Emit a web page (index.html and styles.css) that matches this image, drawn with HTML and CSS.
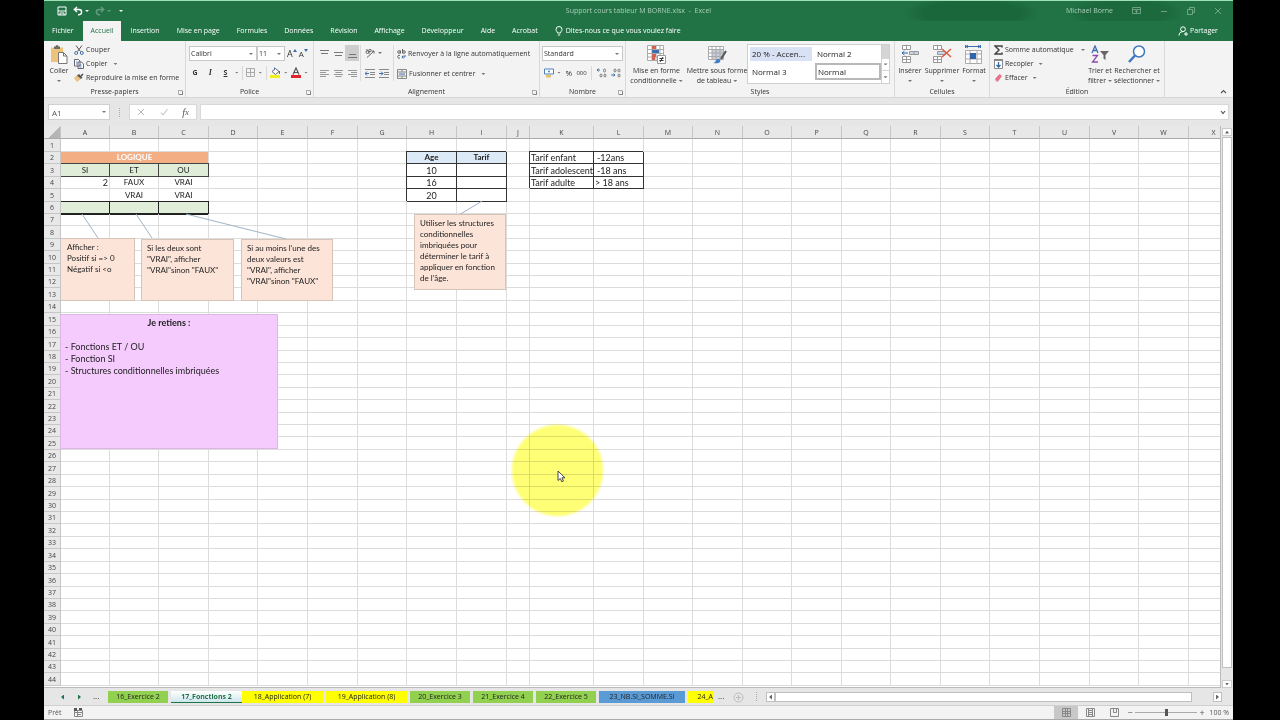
FILE: index.html
```html
<!DOCTYPE html>
<html lang="fr">
<head>
<meta charset="utf-8">
<title>Support cours tableur M BORNE.xlsx - Excel</title>
<link rel="stylesheet" href="styles.css">
</head>
<body>
<div class="app">
  <header class="titlebar">
    <div class="quick">
      <button aria-label="Enregistrer"><svg width="10" height="10" viewBox="0 0 10 10" fill="none" stroke="#fff"><path d="M1 1h8v8H1zM1 5h8M3 9V7h4v2"/></svg></button>
      <button aria-label="Annuler"><svg width="10" height="10" viewBox="0 0 10 10" fill="none" stroke="#fff" stroke-width="1.4"><path d="M4 1L1.300 3.500 4 6M1.500 3.500H6a2.600 2.600 0 0 1 0 5.200H5"/></svg><i class="arrow"></i></button>
      <button class="dim" aria-label="Rétablir"><svg width="10" height="10" viewBox="0 0 10 10" fill="none" stroke="#fff" stroke-width="1.400"><path d="M6 1l2.700 2.500L6 6M8.500 3.500H4a2.600 2.600 0 0 0 0 5.200h1"/></svg><i class="arrow"></i></button>
      <button class="more" aria-label="Personnaliser"><i class="arrow"></i></button>
    </div>
    <div class="doc">Support cours tableur M BORNE.xlsx&nbsp; -&nbsp; Excel</div>
    <div class="win">
      <span>Michael Borne</span>
      <button aria-label="Options du ruban"><svg width="9" height="8" viewBox="0 0 9 8" fill="none" stroke="#cfe6d8"><path d="M.5.500h8v6h-8zM.5 2.500h8M4.500 6V3.500M3 4.500l1.500-1L6 4.500"/></svg></button>
      <button aria-label="Réduire"><svg width="8" height="8" viewBox="0 0 8 8" stroke="#cfe6d8"><path d="M1 4.500h6"/></svg></button>
      <button aria-label="Restaurer"><svg width="8" height="8" viewBox="0 0 8 8" fill="none" stroke="#cfe6d8"><path d="M.5 2.500h5v5h-5zM2.500 2V.5h5v5H6"/></svg></button>
      <button aria-label="Fermer"><svg width="8" height="8" viewBox="0 0 8 8" stroke="#cfe6d8"><path d="M1 1l6 6M7 1L1 7"/></svg></button>
    </div>
  </header>

  <nav class="tabs">
    <button>Fichier</button><button class="active">Accueil</button><button>Insertion</button><button>Mise en page</button><button>Formules</button><button>Données</button><button>Révision</button><button>Affichage</button><button>Développeur</button><button>Aide</button><button>Acrobat</button>
    <button class="tell"><svg width="8" height="10" viewBox="0 0 8 10" fill="none" stroke="#fff"><path d="M2.500 7C2.500 5.500 1 5 1 3.500a3 3 0 0 1 6 0C7 5 5.500 5.500 5.500 7zM2.800 9h2.400"/></svg>Dites-nous ce que vous voulez faire</button>
    <button class="share"><svg width="10" height="10" viewBox="0 0 10 10" fill="none" stroke="#fff"><circle cx="5" cy="3.200" r="2.400"/><path d="M1 9.500C1 7 2.500 5.800 4.500 5.800M6 8h4M8 6v4"/></svg>Partager</button>
  </nav>

  <section class="ribbon">
    <div class="group g-clip">
      <div class="body">
        <button class="big"><svg width="18" height="19" viewBox="0 0 18 19"><path d="M1 2.500h12V17H1z" fill="#eec47a"/><path d="M4 1.500h1.500a1.500 1.500 0 0 1 3 0H10V4H4z" fill="#6b6b6b"/><path d="M8.500 7.500h5l3.500 3.500v7.500H8.500z" fill="#fff" stroke="#777"/><path d="M13.500 7.500V11H17" fill="none" stroke="#777"/></svg><span>Coller</span><i class="arrow"></i></button>
        <div class="list">
          <button><svg width="10" height="10" viewBox="0 0 10 10" fill="none"><path d="M2 .5l4.500 6M8 .5l-4.500 6" stroke="#555"/><circle cx="2.200" cy="8" r="1.500" stroke="#4472a8"/><circle cx="7.800" cy="8" r="1.500" stroke="#4472a8"/></svg>Couper</button>
          <button><svg width="10" height="10" viewBox="0 0 10 10" fill="#fff" stroke="#667"><path d="M.5.500h4l1.500 1.500v5H.5zM4 3h3.500L9.500 5v4.500H4z"/><path d="M2 3h1.500M2 5h1.500M5.500 6h2M5.500 8h2" stroke="#4d80bd"/></svg>Copier<i class="arrow far"></i></button>
          <button><svg width="10" height="10" viewBox="0 0 10 10"><path d="M0 5l3-3 4 4-4 3z" fill="#edc083"/><path d="M3 2.500L5 1l3.500 3.500L7 6z" fill="#555"/><path d="M7 3l2-2" stroke="#444" stroke-width="1.500"/></svg>Reproduire la mise en forme</button>
        </div>
      </div>
      <h2>Presse-papiers<i class="launch"></i></h2>
    </div>

    <div class="group g-font">
      <div class="body rows">
        <div class="row">
          <label class="combo font"><select aria-label="Police"><option>Calibri</option></select><i class="arrow"></i></label><label class="combo size"><select aria-label="Taille"><option>11</option></select><i class="arrow"></i></label>
          <button class="glyph grow" aria-label="Agrandir">A<svg width="4" height="3" viewBox="0 0 4 3"><path d="M0 3l2-3 2 3z" fill="#3c6eaf"/></svg></button><button class="glyph shrink" aria-label="Réduire la police">A<svg width="4" height="3" viewBox="0 0 4 3"><path d="M0 0h4L2 3z" fill="#3c6eaf"/></svg></button>
        </div>
        <div class="row tools">
          <button class="bold">G</button><button class="ital">I</button><button class="under">S</button><i class="arrow"></i><i class="sep"></i>
          <button aria-label="Bordures"><svg width="9" height="9" viewBox="0 0 9 9" fill="none" stroke="#aaa"><path d="M.5.500h8v8h-8zM4.500 0v9M0 4.500h9"/></svg><i class="arrow"></i></button><i class="sep"></i>
          <button aria-label="Remplissage"><svg width="11" height="11" viewBox="0 0 11 11"><path d="M2 4.500L5.500 1.500 9 4.500 5.500 7.500z" fill="#fff" stroke="#666"/><path d="M4.500 3V.5M9.500 4v3" stroke="#4472a8"/><path d="M0 8h10v3H0z" fill="#f2f01c"/></svg><i class="arrow"></i></button>
          <button aria-label="Couleur de police"><svg width="10" height="11" viewBox="0 0 10 11"><path d="M2 7.500L5 1l3 6.500M3.200 5.500h3.600" fill="none" stroke="#555" stroke-width="1.200"/><path d="M0 8h10v3H0z" fill="#e0262a"/></svg><i class="arrow"></i></button>
        </div>
      </div>
      <h2>Police<i class="launch"></i></h2>
    </div>

    <div class="group g-align">
      <div class="body">
        <div class="aligns">
          <button aria-label="Haut"><svg width="9" height="9" viewBox="0 0 9 9" stroke="#777"><path d="M0 1.500h9M1 4.500h7"/></svg></button>
          <button aria-label="Milieu"><svg width="9" height="9" viewBox="0 0 9 9" stroke="#777"><path d="M0 3.500h9M1 6.500h7"/></svg></button>
          <button class="on" aria-label="Bas"><svg width="9" height="9" viewBox="0 0 9 9" stroke="#777"><path d="M1 5.500h7M0 8.500h9"/></svg></button>
          <button aria-label="Gauche"><svg width="9" height="9" viewBox="0 0 9 9" stroke="#999"><path d="M0 1.500h9M0 3.500h6M0 5.500h9M0 7.500h6"/></svg></button>
          <button aria-label="Centrer"><svg width="9" height="9" viewBox="0 0 9 9" stroke="#999"><path d="M0 1.500h9M1.500 3.500h6M0 5.500h9M1.500 7.500h6"/></svg></button>
          <button aria-label="Droite"><svg width="9" height="9" viewBox="0 0 9 9" stroke="#999"><path d="M0 1.500h9M3 3.500h6M0 5.500h9M3 7.500h6"/></svg></button>
        </div>
        <div class="indent">
          <div><button aria-label="Orientation"><svg width="10" height="10" viewBox="0 0 10 10" fill="none" stroke="#666"><circle cx="2.500" cy="4" r="1.500"/><circle cx="5" cy="2.500" r="1.200"/><path d="M1.500 1l3 4.500M2 9.500L9 3M9 5.500V3H6.500"/></svg><i class="arrow"></i></button></div>
          <div><button aria-label="Diminuer le retrait"><svg width="10" height="9" viewBox="0 0 10 9" stroke="#888"><path d="M0 .5h10M5 3.500h5M5 5.500h5M0 8.500h10"/><path d="M0 4.500h4M2 2.500l-2 2 2 2" stroke="#3c6eaf" fill="none"/></svg></button><button aria-label="Augmenter le retrait"><svg width="10" height="9" viewBox="0 0 10 9" stroke="#888"><path d="M0 .5h10M5 3.500h5M5 5.500h5M0 8.500h10"/><path d="M0 4.500h4M2 2.500l2 2-2 2" stroke="#3c6eaf" fill="none"/></svg></button></div>
        </div>
        <div class="merge">
          <button><svg width="9" height="10" viewBox="0 0 9 10" fill="none" stroke="#666"><circle cx="2" cy="3" r="1.300"/><path d="M3.500 1.500v3M5.500 0v4.500"/><circle cx="7" cy="3" r="1.300"/><path d="M3 6.500a1.500 1.500 0 1 0 0 2.500"/><path d="M8 6v2H5M6.200 6.500L5 8l1.200 1.500" stroke="#3c6eaf"/></svg>Renvoyer à la ligne automatiquement</button>
          <button><svg width="10" height="10" viewBox="0 0 10 10" fill="none" stroke="#888"><path d="M.5.500h9v9h-9zM0 3h10M0 7h10M5 0v3M5 7v3"/><path d="M2 5h6" stroke="#3c6eaf"/></svg>Fusionner et centrer<i class="arrow far"></i></button>
        </div>
      </div>
      <h2>Alignement<i class="launch"></i></h2>
    </div>

    <div class="group g-num">
      <div class="body rows">
        <div class="row"><label class="combo fmt"><select aria-label="Format de nombre"><option>Standard</option></select><i class="arrow"></i></label></div>
        <div class="row nums">
          <button aria-label="Monétaire"><svg width="10" height="10" viewBox="0 0 10 10"><path d="M.5 1h9v5h-9z" fill="#fff" stroke="#4d80bd"/><circle cx="5" cy="3.500" r="1" fill="#4d80bd"/><path d="M2 7h5v2.500H2z" fill="#e9bd6e"/></svg><i class="arrow"></i></button>
          <button class="pct">%</button><button class="zeros">000</button><i class="sep"></i>
          <button class="dec" aria-label="Ajouter une décimale"><svg width="10" height="10" viewBox="0 0 10 10" fill="none" stroke="#777"><path d="M0 2h3M1.500 .5L0 2l1.500 1.500" stroke="#3c6eaf"/><ellipse cx="7.500" cy="2.500" rx="1" ry="1.500"/><ellipse cx="4" cy="7.500" rx="1" ry="1.500"/><ellipse cx="8" cy="7.500" rx="1" ry="1.500"/></svg></button>
          <button class="dec" aria-label="Réduire les décimales"><svg width="10" height="10" viewBox="0 0 10 10" fill="none" stroke="#777"><ellipse cx="4" cy="2.500" rx="1" ry="1.500"/><ellipse cx="8" cy="2.500" rx="1" ry="1.500"/><ellipse cx="8" cy="7.500" rx="1" ry="1.500"/><path d="M0 7h4M2.500 5.500L4 7 2.500 8.500" stroke="#3c6eaf"/></svg></button>
        </div>
      </div>
      <h2>Nombre<i class="launch"></i></h2>
    </div>

    <div class="group g-style">
      <div class="body">
        <button class="big"><svg width="19" height="19" viewBox="0 0 19 19"><path d="M.5.500h16v15H.5zM.5 4.500h16M.5 8.500h16M.5 12h16M5 .5v15M9 .5v15M13 .5v15" fill="#fff" stroke="#aaa"/><path d="M5 1h4v3H5zM5 9h4v3H5zM5 12h3v3H5z" fill="#d4604f"/><path d="M5 5h7v3H5z" fill="#3c6eaf"/><path d="M10.500 10.500h8v8h-8z" fill="#fff" stroke="#999"/><path d="M12.500 13.500h4M12.500 15.500h4M16 12l-3 5" stroke="#333"/></svg><span>Mise en forme<br>conditionnelle<i class="arrow"></i></span></button>
        <button class="big"><svg width="19" height="19" viewBox="0 0 19 19"><path d="M.5 1.500h15v13H.5z" fill="#fff" stroke="#aaa"/><path d="M4 5h11v9H4z" fill="#c5cdd8"/><path d="M.5 4.500h15M.5 8h15M.5 11.500h15M4 1.500v13M8 1.500v13M12 1.500v13" stroke="#aaa"/><path d="M18 6l-5 8" stroke="#555" stroke-width="2"/><path d="M5 18c3 0 2-4 5-4 2 0 3 1 2 3-1 1.500-4 1.500-7 1z" fill="#3f7fc6"/></svg><span>Mettre sous forme<br>de tableau<i class="arrow"></i></span></button>
        <div class="gallery">
          <div class="styles"><button class="accent">20 % - Accen...</button><button>Normal 2</button><button>Normal 3</button><button class="sel">Normal</button></div>
          <div class="gscroll"><button class="off" aria-label="Haut"></button><button aria-label="Bas"><i class="arrow"></i></button><button aria-label="Plus"><i class="arrow"></i></button></div>
        </div>
      </div>
      <h2>Styles</h2>
    </div>

    <div class="group g-cell">
      <div class="body">
        <button class="big"><svg width="18" height="19" viewBox="0 0 18 19" fill="#fff" stroke="#999"><path d="M1.500.500h8v4h-8zM5.500.500v4M1.500 11.500h8v6h-8zM5.500 11.500v6M1.500 14.500h8"/><path d="M8.500 6.500h9v3h-9zM13 6.500v3" fill="#c9d6e8"/><path d="M1 8h6M3.500 6L1 8l2.500 2" stroke="#2f67ad" fill="none"/></svg><span>Insérer</span><i class="arrow"></i></button>
        <button class="big"><svg width="20" height="19" viewBox="0 0 20 19" fill="#fff" stroke="#999"><path d="M1.500.500h8v4h-8zM5.500.500v4M1.500 11.500h8v6h-8zM5.500 11.500v6M1.500 14.500h8"/><path d="M5.500 6.500h8v3h-8z" fill="#c9d6e8"/><path d="M10 4l9 8M19 4l-9 8" stroke="#da5a3c" stroke-width="1.500"/></svg><span>Supprimer</span><i class="arrow"></i></button>
        <button class="big"><svg width="18" height="19" viewBox="0 0 18 19"><path d="M1 1.500h14M3 0L1 1.500 3 3M13 0l2 1.500L13 3M.5 0v3M15.500 0v3" stroke="#3c6eaf" fill="none"/><path d="M.5 5.500h16v13H.5zM5 5.500v13M12 5.500v13M.5 9h16M.5 14h16" fill="#fff" stroke="#aaa"/><path d="M5 8h6v6H5z" fill="#2f67ad"/></svg><span>Format</span><i class="arrow"></i></button>
      </div>
      <h2>Cellules</h2>
    </div>

    <div class="group g-edit">
      <div class="body">
        <div class="list">
          <button><svg width="9" height="10" viewBox="0 0 9 10" fill="none" stroke="#444" stroke-width="1.500"><path d="M8 2.500V1H1l4 4-4 4h7V7.500"/></svg>Somme automatique<i class="arrow far"></i></button>
          <button><svg width="9" height="10" viewBox="0 0 9 10"><path d="M.5.500h8v9h-8z" fill="#fff" stroke="#888"/><path d="M0 0h9v2H0z" fill="#888"/><path d="M4.500 3v5M2.500 6l2 2 2-2" stroke="#2f67ad" fill="none" stroke-width="1.300"/></svg>Recopier<i class="arrow"></i></button>
          <button><svg width="9" height="10" viewBox="0 0 9 10"><path d="M1 6l4.500-5L8 3 4 8.500H2z" fill="#e57385"/><path d="M1 6l2.500 2.500H2z" fill="#f5bcc4"/></svg>Effacer<i class="arrow"></i></button>
        </div>
        <button class="big"><svg width="18" height="19" viewBox="0 0 18 19" fill="none"><path d="M1 8l3-7 3 7M2 5.500h4" stroke="#3c6eaf" stroke-width="1.300"/><path d="M1.500 10.500h5l-5 6.500h5.500" stroke="#8a4bab" stroke-width="1.300"/><path d="M9 6h9l-3.500 4v5l-2-1.500V10z" fill="#666"/></svg><span>Trier et<br>filtrer<i class="arrow"></i></span></button>
        <button class="big"><svg width="18" height="19" viewBox="0 0 18 19" fill="none" stroke="#3f78bd"><circle cx="11" cy="6.500" r="5.500" fill="#fff" stroke-width="1.500"/><path d="M7 10.500L1 17" stroke-width="2.500"/></svg><span>Rechercher et<br>sélectionner<i class="arrow"></i></span></button>
      </div>
      <h2>Édition</h2>
    </div>
    <button class="collapse" aria-label="Réduire le ruban"><svg width="7" height="5" viewBox="0 0 7 5" fill="none" stroke="#555" stroke-width="1.200"><path d="M1 4l2.500-2.500L6 4"/></svg></button>
  </section>

  <section class="formula">
    <label class="namebox"><input aria-label="Zone Nom" value="A1"><i class="arrow"></i></label>
    <span class="dots"></span>
    <div class="fx"><button aria-label="Annuler"><svg width="8" height="8" viewBox="0 0 8 8" stroke="#bbb"><path d="M1 1l6 6M7 1L1 7"/></svg></button><button aria-label="Entrer"><svg width="8" height="8" viewBox="0 0 8 8" fill="none" stroke="#bbb"><path d="M1 4.500L3 7l4.500-6"/></svg></button><button class="fn"><em>f</em>x</button></div>
    <label class="entry"><input aria-label="Barre de formule"><svg width="6" height="5" viewBox="0 0 6 5" fill="none" stroke="#555" stroke-width="1.200"><path d="M1 1l2 2.500L5 1"/></svg></label>
  </section>

  <main class="work">
    <div class="sheet">
      <table id="grid"></table>
      <svg class="links" width="500" height="120" fill="none" stroke="#9fb4c8"><path d="M38 88l16 24M92 88l16 24M142 88l100 25M438 75l-23 14"/></svg>
      <div class="note n1">Afficher :<br>Positif si =&gt; 0<br>Négatif si &lt;o</div>
      <div class="note n2">Si les deux sont<br>"VRAI", afficher<br>"VRAI"sinon "FAUX"</div>
      <div class="note n3">Si au moins l'une des<br>deux valeurs est<br>"VRAI", afficher<br>"VRAI"sinon "FAUX"</div>
      <div class="note n4">Utiliser les structures<br>conditionnelles<br>imbriquées pour<br>déterminer le tarif à<br>appliquer en fonction<br>de l'âge.</div>
      <div class="memo"><h3>Je retiens :</h3><p>- Fonctions ET / OU</p><p>- Fonction SI</p><p>- Structures conditionnelles imbriquées</p></div>
      <div class="halo"></div>
      <svg class="pointer" width="9" height="13" viewBox="0 0 9 13"><path d="M1 1v9.500l2.300-2 1.500 3.300 1.600-.8L5 7.800h3z" fill="#fff" stroke="#444"/></svg>
    </div>
    <div class="vscroll"><button class="up" aria-label="Monter"></button><div class="thumb"></div><button class="down" aria-label="Descendre"></button></div>
  </main>

  <nav class="sheets">
    <button class="nav prev" aria-label="Précédent"></button><button class="nav next" aria-label="Suivant"></button><span class="dotdot">...</span>
    <button class="tab green">16_Exercice 2</button><button class="tab current">17_Fonctions 2</button><button class="tab yellow">18_Application (7)</button><button class="tab yellow">19_Application (8)</button><button class="tab green">20_Exercice 3</button><button class="tab green">21_Exercice 4</button><button class="tab green">22_Exercice 5</button><button class="tab blue">23_NB.SI_SOMME.SI</button><button class="tab yellow cut">24_A</button>
    <span class="dotdot end">...</span>
    <button class="add" aria-label="Nouvelle feuille"><svg width="11" height="11" viewBox="0 0 11 11" fill="none" stroke="#bbb"><circle cx="5.500" cy="5.500" r="4.500"/><path d="M5.500 3v5M3 5.500h5"/></svg></button>
    <span class="dots"></span>
    <div class="hscroll"><button class="left" aria-label="Gauche"></button><div class="thumb"></div><div class="track"></div><button class="right" aria-label="Droite"></button></div>
  </nav>

  <footer class="status">
    <span>Prêt</span>
    <svg class="macro" width="9" height="9" viewBox="0 0 9 9" fill="none" stroke="#888"><path d="M.5 2.500h8v6h-8zM0 4.500h9M3 6.500h4M3.500 3v5"/><path d="M0 0h3v3H0zM5 0h3v2H5z" fill="#555" stroke="none"/></svg>
    <div class="views">
      <button class="on" aria-label="Normal"><svg width="9" height="9" viewBox="0 0 9 9" fill="none" stroke="#888"><path d="M.5.500h8v8h-8zM3.500 0v9M5.500 0v9M0 3.500h9M0 5.500h9"/></svg></button>
      <button aria-label="Mise en page"><svg width="9" height="9" viewBox="0 0 9 9" fill="none" stroke="#888"><path d="M.5.500h8v8h-8zM2.500 1v7M6.500 1v7M3 2.500h3M3 4.500h3M3 6.500h3"/></svg></button>
      <button aria-label="Sauts de page"><svg width="9" height="9" viewBox="0 0 9 9" fill="none" stroke="#888"><path d="M.5.500h8v8h-8zM3.500 0v4.500h3V0"/></svg></button>
    </div>
    <button class="z">−</button><input type="range" aria-label="Zoom" value="50"><button class="z">+</button><span class="pc">100 %</span>
  </footer>
</div>
<script src="grid.js"></script>
</body>
</html>
```

FILE: styles.css
```css
* { box-sizing: border-box; }
body { margin: 0; background: #000; color: #333; font: 8px/10px "Open Sans", "Noto Sans", sans-serif; }
button, input, select { font: inherit; color: inherit; border: 0; padding: 0; margin: 0; background: none; border-radius: 0; }
button { display: flex; align-items: center; justify-content: center; white-space: nowrap; }
svg { display: block; flex: none; }
h2, h3, p { margin: 0; font-weight: 400; font-size: inherit; }
.app { margin: 0 47px 0 44px; min-height: 100vh; display: flex; flex-direction: column; background: #e6e6e6; font-size: 7px; }
.arrow { flex: none; width: 4px; height: 2px; margin-left: 3px; background: #777; clip-path: polygon(0 0, 100% 0, 50% 100%); display: inline-block; }
.sep { width: 1px; height: 14px; background: #d8d8d8; }

.titlebar { height: 21px; border-top: 1px solid #9fe0b8; display: grid; grid-template-columns: 1fr auto 1fr; align-items: center; color: #a9cfb9; background: radial-gradient(70px 18px at 78% 60%, #1b673c 70%, transparent), radial-gradient(60px 18px at 91% 60%, #1c693e 70%, transparent), #217346; }
.quick { display: flex; gap: 6px; padding-left: 13px; }
.quick .arrow { background: #fff; margin-left: 2px; }
.dim { opacity: .3; }
.win { display: flex; justify-content: flex-end; align-items: center; gap: 19px; padding-right: 11px; }
.win button { opacity: .45; }

.tabs { height: 20px; display: flex; gap: 1px; background: #217346; color: #fff; }
.tabs button { padding: 0 8px; }
.tabs .active { background: #f3f3f3; color: #217346; }
.tabs .tell { gap: 3px; }
.tabs .share { margin-left: auto; gap: 2px; padding-right: 15px; }

.ribbon { height: 57px; display: flex; background: #f3f3f3; border-bottom: 1px solid #d5d5d5; }
.group { display: flex; flex-direction: column; border-right: 1px solid #d9d9d9; flex: none; }
.group .body { flex: 1; display: flex; padding-top: 2px; }
.group h2 { height: 10px; line-height: 10px; text-align: center; position: relative; }
.launch { position: absolute; right: 2px; top: 3px; width: 5px; height: 5px; border: 1px solid #aaa; border-right-color: transparent; border-bottom-color: transparent; }
.launch::after { content: ""; position: absolute; right: -1px; bottom: -1px; width: 3px; height: 3px; border: 1px solid #888; border-left: 0; border-top: 0; }
.g-clip { width: 142px; } .g-font { width: 128px; } .g-align { width: 226px; } .g-num { width: 86px; } .g-style { width: 269px; } .g-cell { width: 95px; } .g-edit { width: 175px; }
.big { flex-direction: column; justify-content: flex-start; padding-top: 2px; gap: 2px; text-align: center; }
.big > .arrow { margin: 2px 0 0; }
.g-clip .big { width: 30px; }
.list { display: flex; flex-direction: column; gap: 4px; padding-top: 2px; }
.list button { justify-content: flex-start; height: 10px; gap: 2px; }
.list .far, .merge .far { margin-left: 4px; }
.rows { flex-direction: column; gap: 4px; }
.row { display: flex; align-items: center; height: 15px; }
.g-font .body { padding: 5px 4px 0 3px; }
.combo, .namebox { position: relative; display: block; flex: none; background: #fff; border: 1px solid #c8c8c8; height: 15px; }
.combo select { appearance: none; width: 100%; height: 13px; padding-left: 1px; outline: 0; display: block; }
.combo .arrow, .namebox .arrow { position: absolute; right: 3px; top: 6px; }
.font { width: 68px; } .size { width: 28px; }
.glyph { font-size: 8px; width: 13px; } .glyph svg { align-self: flex-start; }
.grow { margin-left: 1px; font-size: 9px; }
.tools { justify-content: space-between; padding-right: 1px; }
.bold, .ital, .under { width: 12px; }
.tools > .arrow { margin: 0; }
.bold { font-weight: 700; } .ital { font-style: italic; font-family: "Liberation Serif", serif; font-weight: 700; font-size: 8px; } .under { text-decoration: underline; font-weight: 700; }

.aligns { display: grid; grid-template-columns: repeat(3, 14px); grid-template-rows: 16px 16px; row-gap: 4px; padding: 2px 0 0 3px; }
.aligns .on { background: #cdcdcd; }
.indent { margin: 2px 3px 0 1px; width: 34px; border: 1px solid #dadada; border-width: 0 1px; height: 36px; display: flex; flex-direction: column; gap: 4px; padding-left: 4px; }
.indent div { display: flex; height: 16px; gap: 4px; }
.merge { display: flex; flex-direction: column; gap: 4px; padding-top: 3px; }
.merge button { height: 16px; gap: 2px; justify-content: flex-start; }
.g-num .body { padding: 5px 2px 0 2px; }
.fmt { width: 81px; }
.nums { justify-content: space-between; padding: 0 2px; }
.pct { font-size: 8px; } .zeros { font-size: 6px; }
.g-style .big { width: 61px; }
.g-style .big + .big { width: 60px; }
.g-style .big .arrow, .g-edit .big .arrow { margin-left: 2px; vertical-align: 1px; }
.gallery { margin-top: 1px; width: 143px; height: 40px; display: flex; border: 1px solid #cfcfcf; background: #fff; font-size: 8px; }
.styles { flex: 1; display: grid; grid-template-columns: 62px 66px; grid-template-rows: 14px 17px; gap: 2px 3px; padding: 2px 0 0 2px; }
.styles button { justify-content: flex-start; padding-left: 1px; border: 1px solid transparent; color: #222; }
.styles .accent { background: #d9e1f5; } .styles .sel { border: 2px solid #b8b8b8; }
.gscroll { width: 9px; display: grid; grid-template-rows: 1fr 1fr 1fr; border-left: 1px solid #cfcfcf; }
.gscroll button + button { border-top: 1px solid #d5d5d5; }
.gscroll .arrow { margin: 0; } .gscroll .off { background: #d5d5d5; }
.g-cell .big { width: 30px; }
.g-cell .big:nth-child(2) { width: 34px; }
.g-edit .list { width: 97px; padding-left: 4px; }
.g-edit .list .far { margin-left: auto; margin-right: 2px; }
.g-edit .big { width: 26px; }
.g-edit .big + .big { width: 48px; }
.collapse { margin: auto 6px 3px auto; }

.formula { display: flex; padding: 6px 4px 6px; height: 28px; align-items: stretch; color: #555; }
.namebox { width: 62px; height: 16px; border-color: #d0d0d0; }
.namebox input { width: 40px; height: 14px; padding-left: 3px; font-size: 8px; outline: 0; display: block; }
.dots { width: 1px; height: 9px; margin: 4px 9px 0; border-left: 1px dotted #aaa; }
.fx { width: 68px; display: flex; justify-content: space-around; background: #fff; border: 1px solid #d8d8d8; }
.fn { font: italic 400 8px "Liberation Serif", serif; } .fn em { font-size: 10px; }
.entry { flex: 1; margin-left: 3px; background: #fff; border: 1px solid #d8d8d8; display: flex; align-items: center; padding-right: 2px; }
.entry input { flex: 1; outline: 0; }

.work { flex: 1; display: flex; }
.sheet { flex: 1; min-width: 0; position: relative; overflow: hidden; background: #fff; border-right: 1px solid #bbb; border-bottom: 1px solid #bbb; font: 8px/11px Lato, "Open Sans", sans-serif; color: #222; }
table { table-layout: fixed; border-spacing: 0; }
th, td { padding: 0; border: 0 solid #dcdcdc; border-width: 0 1px 1px 0; overflow: hidden; white-space: nowrap; line-height: 11px; font-weight: 400; text-align: center; }
td { font-size: 9px; }
th { background: #e8e8e8; border-color: #c6c6c6; color: #444; font-size: 7px; font-family: "Open Sans", sans-serif; }
thead th { border-bottom-color: #aaa; }
.corner { background: linear-gradient(135deg, #e8e8e8 60%, #b5b5b5 60%); }
.title { background: #f4ae84; color: #fff; font-weight: 700; font-size: 8px; }
.word { font-size: 8px; }
.head { background: #e0eed9; border-color: #444; box-shadow: 0 -1px #444; font-size: 8px; }
.thick { background: #e0eed9; border-color: #222; box-shadow: 0 -1px #222, 0 1px #222; }
.num { text-align: right; padding-right: 1px; }
.box { border-color: #333; box-shadow: -1px -1px #333; }
.bluehead { background: #dbeaf6; font-weight: 700; font-size: 8px; }
.l { text-align: left; padding-left: 1px; } .in { padding-left: 3px; }
.links { position: absolute; left: 0; top: 0; }
.note { position: absolute; background: #fce4d9; border: 1px solid #d8c3b8; padding: 3px 0 0 5px; white-space: nowrap; }
.n1 { left: 17px; top: 112px; width: 74px; height: 63px; border-left: 0; padding-left: 6px; }
.n2 { left: 97px; top: 113px; width: 93px; height: 62px; }
.n3 { left: 197px; top: 113px; width: 92px; height: 62px; }
.n4 { left: 370px; top: 88px; width: 92px; height: 76px; }
.memo { position: absolute; left: 16px; top: 188px; width: 218px; height: 135px; background: #f5cbfe; border: 1px solid #dcb6e4; padding: 2px 4px; line-height: 12px; font-size: 9px; }
.memo h3 { text-align: center; font-weight: 700; margin-bottom: 12px; }
.halo { position: absolute; left: 466px; top: 297px; width: 95px; height: 95px; border-radius: 50%; background: radial-gradient(closest-side, #ffff76 92%, transparent); mix-blend-mode: multiply; }
.pointer { position: absolute; left: 513px; top: 344px; }
.vscroll { width: 12px; display: flex; flex-direction: column; padding: 2px 1px 0; }
.vscroll button { height: 8px; background: #fff; border: 1px solid #ccc; }
.vscroll .thumb { background: #fff; border: 1px solid #c0c0c0; flex: 1; margin-bottom: 12px; margin-top: 1px; }
.up::before, .down::before, .left::before, .right::before, .nav::before { content: ""; width: 4px; height: 3px; background: #666; clip-path: polygon(50% 0, 100% 100%, 0 100%); }
.down::before { clip-path: polygon(0 0, 100% 0, 50% 100%); }
.left::before, .right::before, .nav::before { width: 3px; height: 5px; clip-path: polygon(0 50%, 100% 0, 100% 100%); }
.right::before, .next::before { clip-path: polygon(0 0, 100% 50%, 0 100%); }

.sheets { height: 18px; display: flex; align-items: stretch; padding: 3px 11px 2px 15px; font-size: 7px; color: #222; border-bottom: 1px solid #d0d0d0; }
.nav { width: 7px; margin-right: 10px; } .nav::before { background: #217346; }
.dotdot { width: 15px; text-align: left; font-size: 8px; }
.tab { width: 60px; margin-right: 3px; flex: none; }
.green { background: #92d050; } .yellow { background: #ff0; width: 81px; } .blue { background: #5b9bd5; width: 86px; }
.current { width: 71px; margin: 0; background: linear-gradient(#fff, #cde6ee); color: #217346; font-weight: 700; border-bottom: 1px solid #217346; }
.tab.cut { width: 25px; justify-content: flex-end; margin-right: 5px; }
.dotdot.end { width: 15px; }
.add { width: 11px; }
.sheets .dots { margin: 1px 9px 0 12px; }
.hscroll { flex: 1; display: flex; height: 10px; margin-top: 1px; }
.hscroll button { width: 9px; background: #fff; border: 1px solid #c0c0c0; }
.hscroll .thumb { flex: 1; background: #fff; border: 1px solid #c0c0c0; } .track { width: 21px; }

.status { height: 14px; display: flex; align-items: center; background: #f3f3f3; border-bottom: 1px solid #aaa; padding: 0 4px; color: #555; }
.macro { margin-left: 12px; }
.views { margin-left: auto; display: flex; align-self: stretch; } .views button { width: 24px; } .views .on { background: #c8c8c8; }
.z { font-size: 9px; width: 8px; }
.status input { appearance: none; width: 62px; height: 8px; background: linear-gradient(#aaa, #aaa) center / 100% 1px no-repeat; margin: 0 1px; }
.status input::-webkit-slider-thumb { appearance: none; width: 3px; height: 7px; background: #555; }
.pc { width: 23px; text-align: right; white-space: nowrap; }
```

FILE: grid.js
```js
const widths = [49, 49, 50, 49, 50, 50, 49, 50, 50, 23, 64, 50, 49, 50, 49, 50, 49, 50, 49, 50, 50, 49, 50, 50];
const headerWidth = 17;
const rowCount = 44;
const rowPitch = 12.42;

const cells = {
  A2: ["LOGIQUE", "title", 3],
  A3: ["SI", "head"], B3: ["ET", "head"], C3: ["OU", "head"],
  A4: ["2", "num"], B4: ["FAUX", "word"], C4: ["VRAI", "word"],
  B5: ["VRAI", "word"], C5: ["VRAI", "word"],
  A6: ["", "thick"], B6: ["", "thick"], C6: ["", "thick"],
  H2: ["Age", "box bluehead"], I2: ["Tarif", "box bluehead"],
  H3: ["10", "box"], I3: ["", "box"],
  H4: ["16", "box"], I4: ["", "box"],
  H5: ["20", "box"], I5: ["", "box"],
  K2: ["Tarif enfant", "box l"], L2: ["-12ans", "box l in"],
  K3: ["Tarif adolescent", "box l"], L3: ["-18 ans", "box l in"],
  K4: ["Tarif adulte", "box l"], L4: ["> 18 ans", "box l"]
};

const add = (parent, tag, text, cls) => {
  const el = document.createElement(tag);
  if (text) el.textContent = text;
  if (cls) el.className = cls;
  parent.append(el);
  return el;
};

const table = document.getElementById("grid");
table.style.width = headerWidth + widths.reduce((a, b) => a + b, 0) + "px";
const group = add(table, "colgroup");
[headerWidth, ...widths].forEach(w => { add(group, "col").style.width = w + "px"; });

const letters = widths.map((_, i) => String.fromCharCode(65 + i));
const headRow = add(add(table, "thead"), "tr");
headRow.style.height = "13px";
add(headRow, "th", "", "corner");
letters.forEach(c => add(headRow, "th", c));

const body = add(table, "tbody");
for (let r = 1; r <= rowCount; r++) {
  const tr = add(body, "tr");
  tr.style.height = Math.round(r * rowPitch + 0.4) - Math.round((r - 1) * rowPitch + 0.4) + "px";
  add(tr, "th", String(r));
  for (let i = 0; i < letters.length; i++) {
    const [text, cls, span] = cells[letters[i] + r] || ["", ""];
    const td = add(tr, "td", text, cls);
    if (span) { td.colSpan = span; i += span - 1; }
  }
}
```
